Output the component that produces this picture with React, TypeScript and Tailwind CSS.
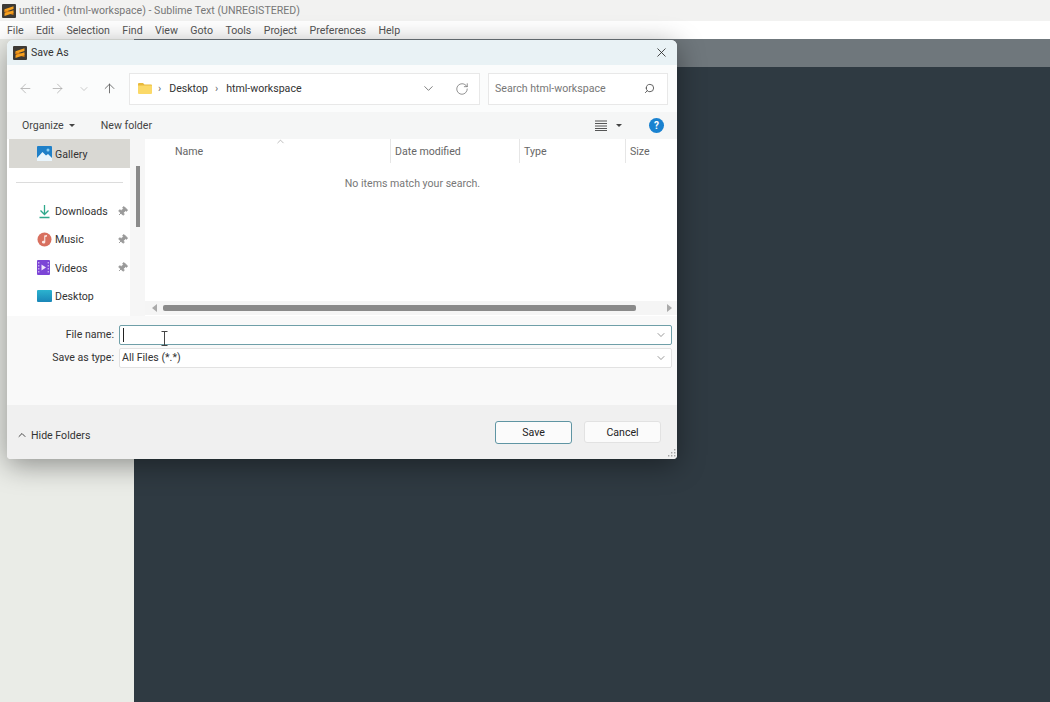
import { ArrowLeft, ArrowRight, ArrowUp, ChevronDown, ChevronUp, Pin, RotateCw, Search, X } from "lucide-react"

const menus = ["File", "Edit", "Selection", "Find", "View", "Goto", "Tools", "Project", "Preferences", "Help"]

function SublimeIcon() {
  return (
    <svg width="14" height="14" viewBox="0 0 14 14">
      <rect width="14" height="14" rx="1" fill="#3d3a36" />
      <path d="M2.5 5.2 11.5 2.2v2.8L2.5 8z" fill="#f7a11f" />
      <path d="M2.5 6.2 11.5 8.6v2.4L2.5 8.6z" fill="#d97f12" />
      <path d="M2.5 9.2 11.5 6.2v2.8L2.5 12z" fill="#f7a11f" />
    </svg>
  )
}

function GalleryIcon() {
  return (
    <svg width="15" height="15" viewBox="0 0 15 15">
      <rect width="15" height="15" rx="1" fill="#1f80c8" />
      <path d="M0 12 5.5 6 9 9.5 11 8l4 4v3H0z" fill="#e9f5fc" />
      <circle cx="11" cy="4" r="1.5" fill="#8ccdf0" />
    </svg>
  )
}

function DownloadIcon() {
  return (
    <svg width="15" height="15" viewBox="0 0 15 15" fill="none" stroke="#2fa98c" strokeWidth="1.3">
      <path d="M7.5 1v9M3.5 6.5l4 4 4-4" />
      <path d="M2.5 13.5h10" />
    </svg>
  )
}

function MusicIcon() {
  return (
    <svg width="15" height="15" viewBox="0 0 15 15">
      <circle cx="7.5" cy="7.5" r="7" fill="#d8705f" />
      <path d="M7.2 3.5 10 3v1.6l-1.7.4v5a1.7 1.4 0 1 1-1.1-1.2z" fill="#fbe9e4" />
    </svg>
  )
}

function VideoIcon() {
  return (
    <svg width="13" height="15" viewBox="0 0 13 15">
      <rect width="13" height="15" rx="1" fill="#7c45d6" />
      <path d="M4.5 4.5 9 7.5l-4.5 3z" fill="#efe4fb" />
      <path d="M1 2h1.4v1.4H1zM1 5h1.4v1.4H1zM1 8h1.4v1.4H1zM1 11h1.4v1.4H1zM10.6 2H12v1.4h-1.4zM10.6 5H12v1.4h-1.4zM10.6 8H12v1.4h-1.4zM10.6 11H12v1.4h-1.4z" fill="#c9aef0" />
    </svg>
  )
}

function DesktopIcon() {
  return (
    <svg width="15" height="12" viewBox="0 0 15 12">
      <defs>
        <linearGradient id="desk" x1="0" y1="0" x2="0" y2="1">
          <stop offset="0" stopColor="#2bb3cf" />
          <stop offset="1" stopColor="#1a86b8" />
        </linearGradient>
      </defs>
      <rect width="15" height="12" rx="1" fill="url(#desk)" />
    </svg>
  )
}

function FolderIcon() {
  return (
    <svg width="14" height="11" viewBox="0 0 14 11">
      <path d="M0 1a1 1 0 0 1 1-1h4l1.5 1.5H13a1 1 0 0 1 1 1V3H0z" fill="#e8b93c" />
      <path d="M0 2.5h14V10a1 1 0 0 1-1 1H1a1 1 0 0 1-1-1z" fill="#fbd968" />
    </svg>
  )
}

function PinIcon() {
  return <Pin size={11} className="ml-auto rotate-45 fill-[#9a9a9a] text-[#9a9a9a]" />
}

function NavItem({ icon, label, pinned }: { icon: React.ReactNode; label: string; pinned?: boolean }) {
  return (
    <div className="flex h-[28.4px] items-center pl-[28px] pr-[2px]">
      <div className="flex w-[18px] shrink-0 items-center">{icon}</div>
      <span className="pt-[1px] text-[#333]">{label}</span>
      {pinned && <PinIcon />}
    </div>
  )
}

function Column({ label, width, divider }: { label: string; width: string; divider?: boolean }) {
  return (
    <div className={`flex h-[24px] items-center pl-[4px] pt-[2px] text-[#666] ${width} ${divider ? "border-l border-[#e6e6e6]" : ""}`}>
      {label}
    </div>
  )
}

function SaveAsDialog() {
  return (
    <div className="absolute left-[7px] top-[40px] flex h-[419px] w-[670px] flex-col overflow-hidden rounded-t-[6px] rounded-b-[4px] bg-[#fbfcfc] text-[10.6px] shadow-[0_6px_28px_rgba(0,0,0,0.4)]">
      <div className="flex h-[25px] shrink-0 items-center bg-[#e9f2f5] pl-[6px] pr-[8px]">
        <SublimeIcon />
        <span className="ml-[4px] text-[#333]">Save As</span>
        <X size={15} strokeWidth={1.3} className="ml-auto text-[#222]" />
      </div>

      <div className="flex h-[47px] shrink-0 items-center pl-[11px] pr-[9px]">
        <ArrowLeft size={15} strokeWidth={1.2} className="text-[#a8a8a8]" />
        <ArrowRight size={15} strokeWidth={1.2} className="ml-[17px] text-[#a8a8a8]" />
        <ChevronDown size={12} strokeWidth={1.2} className="ml-[13px] text-[#a8a8a8]" />
        <ArrowUp size={15} strokeWidth={1.3} className="ml-[12px] text-[#555]" />
        <div className="ml-[12px] flex h-[32px] w-[351px] items-center border border-[#e8e8e8] bg-white pl-[8px] pr-[10px]">
          <FolderIcon />
          <span className="ml-[6px] text-[#666]">›</span>
          <span className="ml-[8px] text-[#333]">Desktop</span>
          <span className="ml-[7px] text-[#666]">›</span>
          <span className="ml-[8px] text-[#333]">html-workspace</span>
          <ChevronDown size={15} strokeWidth={1.2} className="ml-auto text-[#555]" />
          <RotateCw size={14} strokeWidth={1.2} className="ml-[19px] text-[#666]" />
        </div>
        <div className="ml-[8px] flex h-[32px] w-[180px] items-center border border-[#e8e8e8] bg-white pl-[6px] pr-[12px]">
          <span className="text-[#777]">Search html-workspace</span>
          <Search size={11} strokeWidth={2} className="ml-auto -scale-x-100 text-[#555]" />
        </div>
      </div>

      <div className="flex h-[27px] shrink-0 items-center bg-[#f5f6f6] pl-[15px] pr-[13px]">
        <span className="text-[#444]">Organize</span>
        <span className="ml-[5px] h-0 w-0 border-x-[3px] border-t-[3px] border-x-transparent border-t-[#444]" />
        <span className="ml-[26px] text-[#444]">New folder</span>
        <svg width="12" height="11" viewBox="0 0 12 11" stroke="#555" className="ml-auto">
          <path d="M0 1h12M0 3.5h12M0 6h12M0 8.5h12M0 10.5h12" />
        </svg>
        <span className="ml-[9px] h-0 w-0 border-x-[3px] border-t-[3px] border-x-transparent border-t-[#444]" />
        <div className="ml-[27px] flex h-[15px] w-[15px] items-center justify-center rounded-full bg-[#1a82d0] text-[10px] font-bold text-white">?</div>
      </div>

      <div className="flex h-[177px] shrink-0 bg-white">
        <div className="w-[123px] shrink-0 pl-[2px]">
          <div className="flex h-[29px] items-center bg-[#d9d8d3] pl-[28px]">
            <div className="w-[18px] shrink-0"><GalleryIcon /></div>
            <span className="pt-[3px] text-[#333]">Gallery</span>
          </div>
          <div className="mx-[7px] mt-[14px] border-t border-[#dcdcdc]" />
          <div className="mt-[14px]">
            <NavItem icon={<DownloadIcon />} label="Downloads" pinned />
            <NavItem icon={<MusicIcon />} label="Music" pinned />
            <NavItem icon={<VideoIcon />} label="Videos" pinned />
            <NavItem icon={<DesktopIcon />} label="Desktop" />
          </div>
        </div>

        <div className="w-[15px] shrink-0 bg-[#f6f6f6] pl-[6px] pt-[27px]">
          <div className="h-[61px] w-[4px] bg-[#8a8a8a]" />
        </div>

        <div className="flex min-w-0 flex-1 flex-col">
          <div className="relative flex">
            <div className="flex h-[24px] w-[245px] items-center pl-[30px] pt-[2px] text-[#666]">Name</div>
            <ChevronUp size={11} strokeWidth={1.2} className="absolute left-[130px] top-[-3px] text-[#888]" />
            <Column label="Date modified" width="w-[129px]" divider />
            <Column label="Type" width="w-[106px]" divider />
            <Column label="Size" width="w-[52px]" divider />
          </div>
          <div className="mt-[13px] pl-[3px] text-center text-[#777]">No items match your search.</div>
          <div className="mb-[1px] mt-auto flex h-[14px] items-center bg-[#f5f5f5] pl-[7px] pr-[5px]">
            <span className="h-0 w-0 border-y-[4px] border-r-[5px] border-y-transparent border-r-[#aaa]" />
            <div className="ml-[6px] h-[6px] w-[473px] rounded-[2px] bg-[#8a8a8a]" />
            <span className="ml-auto h-0 w-0 border-y-[4px] border-l-[5px] border-y-transparent border-l-[#aaa]" />
          </div>
        </div>
      </div>

      <div className="flex h-[89px] shrink-0 flex-col gap-[3px] bg-[#f9f9f9] pl-[4px] pr-[5px] pt-[9px]">
        <div className="flex items-center">
          <label className="w-[103px] text-right text-[#333]">File name:</label>
          <div className="relative ml-[5px] flex h-[20px] flex-1 items-center rounded-[2px] border border-[#6f9fa8] bg-white pl-[3px] pr-[4px]">
            <span className="h-[14px] w-px bg-[#222]" />
            <ChevronDown size={12} strokeWidth={1.2} className="ml-auto text-[#555]" />
          </div>
        </div>
        <div className="flex items-center">
          <label className="w-[103px] text-right text-[#333]">Save as type:</label>
          <div className="ml-[5px] flex h-[20px] flex-1 items-center rounded-[2px] border border-[#e2e2e2] bg-white pl-[2px] pr-[4px]">
            <span className="text-[#333]">All Files (*.*)</span>
            <ChevronDown size={12} strokeWidth={1.2} className="ml-auto text-[#555]" />
          </div>
        </div>
      </div>

      <div className="relative flex flex-1 items-center bg-[#f0f0f0] pl-[9px] pr-[16px]">
        <ChevronUp size={12} strokeWidth={1.8} className="mt-[6px] text-[#333]" />
        <span className="ml-[3px] mt-[7px] text-[#333]">Hide Folders</span>
        <button className="ml-auto h-[23px] w-[77px] rounded-[3px] border border-[#5f95a3] bg-[#fbfbfb] pt-[1px] text-[#222]">Save</button>
        <button className="ml-[12px] h-[22px] w-[77px] rounded-[3px] border border-[#e2e2e2] bg-[#fbfbfb] pt-[1px] text-[#222]">Cancel</button>
        <svg width="9" height="9" viewBox="0 0 9 9" fill="#a5a5a5" className="absolute bottom-[1px] right-[1px]">
          <path d="M7 0h1.4v1.4H7zM4 3h1.4v1.4H4zM7 3h1.4v1.4H7zM1 6h1.4v1.4H1zM4 6h1.4v1.4H4zM7 6h1.4v1.4H7z" />
        </svg>
      </div>
    </div>
  )
}

export default function App() {
  return (
    <div className="relative flex h-[702px] w-[1050px] flex-col overflow-hidden font-['Roboto',sans-serif]">
      <div className="flex h-[21px] shrink-0 items-center bg-[#f2f2f1] pl-[2px] text-[10.6px] text-[#777]">
        <SublimeIcon />
        <span className="ml-[3px]">untitled • (html-workspace) - Sublime Text (UNREGISTERED)</span>
      </div>
      <div className="flex h-[18px] shrink-0 items-center gap-[12.4px] bg-white pl-[7px] pt-[2px] text-[10.6px] text-[#555]">
        {menus.map((m) => (
          <span key={m}>{m}</span>
        ))}
      </div>
      <div className="flex min-h-0 flex-1">
        <div className="w-[134px] shrink-0 bg-[#eaece7]" />
        <div className="flex flex-1 flex-col">
          <div className="h-[28px] shrink-0 bg-[#6f777c]" />
          <div className="flex-1 bg-[#2f3a42]" />
        </div>
      </div>

      <SaveAsDialog />

      <svg width="7" height="15" viewBox="0 0 7 15" fill="none" stroke="#444" className="absolute left-[161px] top-[331px]">
        <path d="M0.5 0.5h6M0.5 14.5h6M3.5 0.5v14" />
      </svg>
    </div>
  )
}
